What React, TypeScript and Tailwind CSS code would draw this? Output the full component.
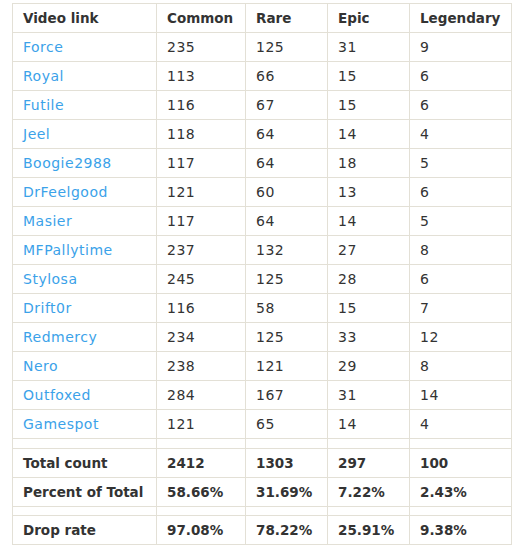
import React from "react";

const rows: [string, number, number, number, number][] = [
  ["Force", 235, 125, 31, 9],
  ["Royal", 113, 66, 15, 6],
  ["Futile", 116, 67, 15, 6],
  ["Jeel", 118, 64, 14, 4],
  ["Boogie2988", 117, 64, 18, 5],
  ["DrFeelgood", 121, 60, 13, 6],
  ["Masier", 117, 64, 14, 5],
  ["MFPallytime", 237, 132, 27, 8],
  ["Stylosa", 245, 125, 28, 6],
  ["Drift0r", 116, 58, 15, 7],
  ["Redmercy", 234, 125, 33, 12],
  ["Nero", 238, 121, 29, 8],
  ["Outfoxed", 284, 167, 31, 14],
  ["Gamespot", 121, 65, 14, 4],
];

const cell = "border border-[#e3e0d6] px-[10px] align-middle whitespace-nowrap";

function Spacer({ h }: { h: string }) {
  return (
    <tr className={h}>
      <td className={cell} />
      <td className={cell} />
      <td className={cell} />
      <td className={cell} />
      <td className={cell} />
    </tr>
  );
}

function SummaryRow({ label, values }: { label: string; values: string[] }) {
  return (
    <tr className="h-[29px] font-bold text-[13.5px]">
      <td className={cell}>{label}</td>
      {values.map((v, i) => (
        <td key={i} className={cell}>
          {v}
        </td>
      ))}
    </tr>
  );
}

export default function App() {
  return (
    <div className="bg-white min-h-screen pt-[3px] pl-[12px] font-['Verdana','DejaVu_Sans',sans-serif] text-[14px] leading-[17px] text-[#333]">
      <table className="border-collapse table-fixed w-[499px]">
        <colgroup>
          <col className="w-[144px]" />
          <col className="w-[89px]" />
          <col className="w-[82px]" />
          <col className="w-[82px]" />
          <col className="w-[102px]" />
        </colgroup>
        <thead>
          <tr className="h-[29px] font-bold text-left text-[13.5px]">
            <th className={cell}>Video link</th>
            <th className={cell}>Common</th>
            <th className={cell}>Rare</th>
            <th className={cell}>Epic</th>
            <th className={cell}>Legendary</th>
          </tr>
        </thead>
        <tbody className="tracking-[0.5px]">
          {rows.map(([name, c, r, e, l]) => (
            <tr key={name} className="h-[29px]">
              <td className={cell}>
                <a href="#" className="text-[#3ba2e9]">
                  {name}
                </a>
              </td>
              <td className={cell}>{c}</td>
              <td className={cell}>{r}</td>
              <td className={cell}>{e}</td>
              <td className={cell}>{l}</td>
            </tr>
          ))}
        </tbody>
        <tbody>
          <Spacer h="h-[10px]" />
          <SummaryRow label="Total count" values={["2412", "1303", "297", "100"]} />
          <SummaryRow label="Percent of Total" values={["58.66%", "31.69%", "7.22%", "2.43%"]} />
          <Spacer h="h-[9px]" />
          <SummaryRow label="Drop rate" values={["97.08%", "78.22%", "25.91%", "9.38%"]} />
        </tbody>
      </table>
    </div>
  );
}
